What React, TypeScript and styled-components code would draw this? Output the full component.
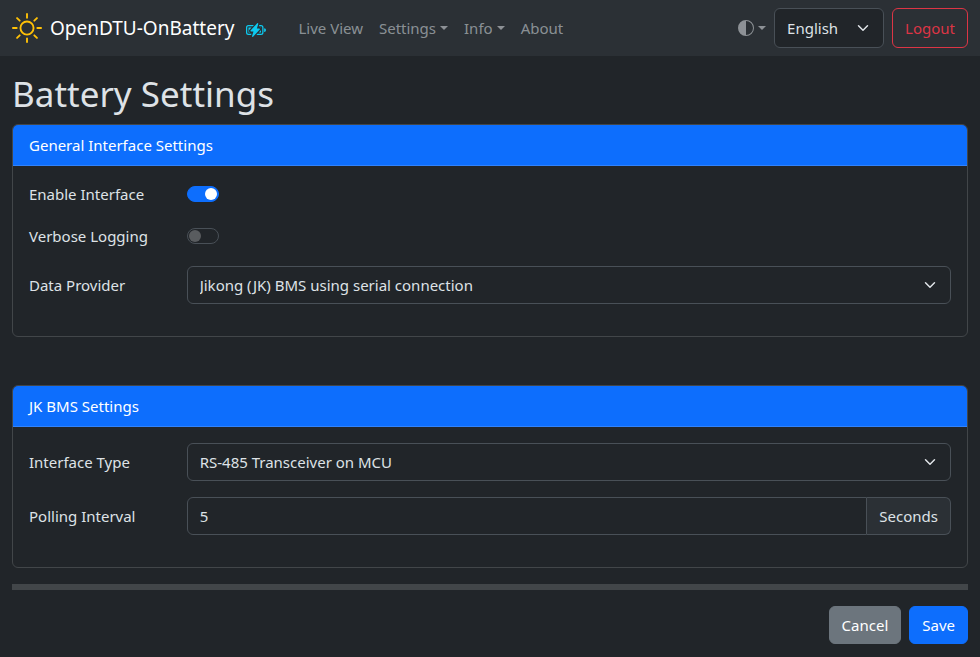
import React from "react";
import styled, { createGlobalStyle } from "styled-components";
import { BsBatteryCharging, BsCircleHalf, BsSun } from "react-icons/bs";

const chevron = `url("data:image/svg+xml,%3csvg xmlns='http://www.w3.org/2000/svg' viewBox='0 0 16 16'%3e%3cpath fill='none' stroke='%23dee2e6' stroke-linecap='round' stroke-linejoin='round' stroke-width='2' d='m2 5 6 6 6-6'/%3e%3c/svg%3e")`;

const GlobalStyle = createGlobalStyle`
  *, *::before, *::after { box-sizing: border-box; }
  body {
    margin: 0;
    background: #212529;
    color: #dee2e6;
    font: 400 15px/24px "Noto Sans", sans-serif;
  }
  button, input, select { font: inherit; }
`;

const Navbar = styled.nav`
  display: flex;
  align-items: center;
  padding: 8px 12px;
  background: #2b3035;
`;

const Brand = styled.a`
  display: flex;
  align-items: center;
  gap: 8px;
  margin-right: 24px;
  font-size: 19px;
  line-height: 40px;
  color: #fff;
  text-decoration: none;
  white-space: nowrap;
`;

const BrandBadge = styled(BsBatteryCharging)`
  margin-left: 12px;
  color: #0dcaf0;
  vertical-align: middle;
`;

const NavLinks = styled.div`
  display: flex;
  flex: 1;
`;

const NavLink = styled.a`
  display: flex;
  align-items: center;
  gap: 4px;
  padding: 8px;
  color: rgba(222, 226, 230, 0.55);
  text-decoration: none;
  white-space: nowrap;
`;

const NavActions = styled.div`
  display: flex;
  align-items: stretch;
  gap: 8px;
  min-height: 40px;
`;

const ThemeButton = styled.button`
  display: flex;
  align-items: center;
  gap: 4px;
  padding: 0;
  border: 0;
  background: none;
  color: rgba(222, 226, 230, 0.55);
`;

const Caret = styled.span`
  border-top: 4px solid;
  border-right: 4px solid transparent;
  border-left: 4px solid transparent;
`;

const Select = styled.select<{ $width?: string }>`
  appearance: none;
  width: ${(p) => p.$width ?? "100%"};
  min-height: 38px;
  padding: 6px 36px 6px 12px;
  border: 1px solid #495057;
  border-radius: 6px;
  background: #212529 ${chevron} no-repeat right 12px center / 16px 12px;
  color: #dee2e6;
`;

const Button = styled.button<{ $tone: "primary" | "secondary" | "danger" }>`
  padding: 6px 12px;
  border: 1px solid
    ${(p) => ({ primary: "#0d6efd", secondary: "#6c757d", danger: "#dc3545" })[p.$tone]};
  border-radius: 6px;
  background: ${(p) => ({ primary: "#0d6efd", secondary: "#6c757d", danger: "transparent" })[p.$tone]};
  color: ${(p) => (p.$tone === "danger" ? "#dc3545" : "#fff")};
`;

const Main = styled.main`
  padding: 16px 12px 12px;
`;

const Title = styled.h1`
  margin: 0 0 8px;
  font-size: 35px;
  font-weight: 400;
  line-height: 44px;
`;

const Card = styled.section`
  border: 1px solid #424649;
  border-radius: 6px;
  overflow: hidden;

  & + & {
    margin-top: 48px;
  }
`;

const CardHeader = styled.h2`
  margin: 0;
  padding: 8px 16px;
  border-bottom: 1px solid #3183fc;
  background: #0d6efd;
  color: #fff;
  font-size: 15px;
  font-weight: 400;
  line-height: 24px;
`;

const CardBody = styled.div`
  padding: 16px;
`;

const Row = styled.div`
  display: grid;
  grid-template-columns: 2fr 10fr;
  align-items: center;
  min-height: 26px;
  margin: 0 -12px 16px;

  & > * {
    min-width: 0;
    margin: 0 12px;
  }
`;

const SwitchRow = styled(Row)`
  align-items: start;
`;

const Control = styled.div`
  display: flex;
`;

const Switch = styled.input`
  appearance: none;
  display: flex;
  align-items: center;
  width: 32px;
  height: 16px;
  margin: 4px 0;
  padding: 1px;
  border: 1px solid #495057;
  border-radius: 8px;
  background: #212529;

  &::before {
    content: "";
    width: 12px;
    height: 12px;
    border-radius: 50%;
    background: #595c5f;
  }

  &:checked {
    justify-content: flex-end;
    border-color: #0d6efd;
    background: #0d6efd;
  }

  &:checked::before {
    background: #fff;
  }
`;

const TextInput = styled.input`
  flex: 1;
  min-width: 0;
  height: 38px;
  padding: 6px 12px;
  border: 1px solid #495057;
  border-radius: 6px 0 0 6px;
  background: #212529;
  color: #dee2e6;
`;

const Unit = styled.span`
  padding: 6px 12px;
  border: 1px solid #495057;
  border-left: 0;
  border-radius: 0 6px 6px 0;
  background: #2b3035;
`;

const Divider = styled.hr`
  height: 6px;
  margin: 16px 0;
  border: 0;
  background: #424649;
`;

const Actions = styled.div`
  display: flex;
  justify-content: flex-end;
  gap: 8px;
`;

export default function App() {
  return (
    <>
      <GlobalStyle />
      <Navbar>
        <Brand href="#">
          <BsSun size={30} color="#ffc107" />
          <span>
            OpenDTU-OnBattery
            <BrandBadge size={20} />
          </span>
        </Brand>
        <NavLinks>
          <NavLink href="#live">Live View</NavLink>
          <NavLink href="#settings">Settings<Caret /></NavLink>
          <NavLink href="#info">Info<Caret /></NavLink>
          <NavLink href="#about">About</NavLink>
        </NavLinks>
        <NavActions>
          <ThemeButton type="button" aria-label="Toggle theme">
            <BsCircleHalf size={16} />
            <Caret />
          </ThemeButton>
          <Select $width="110px" aria-label="Language" defaultValue="English">
            <option>English</option>
            <option>Deutsch</option>
            <option>Français</option>
          </Select>
          <Button type="button" $tone="danger">Logout</Button>
        </NavActions>
      </Navbar>
      <Main>
        <Title>Battery Settings</Title>
        <form onSubmit={(e) => e.preventDefault()}>
          <Card>
            <CardHeader>General Interface Settings</CardHeader>
            <CardBody>
              <SwitchRow>
                <label htmlFor="enable">Enable Interface</label>
                <Control><Switch id="enable" type="checkbox" role="switch" defaultChecked /></Control>
              </SwitchRow>
              <SwitchRow>
                <label htmlFor="verbose">Verbose Logging</label>
                <Control><Switch id="verbose" type="checkbox" role="switch" /></Control>
              </SwitchRow>
              <Row>
                <label htmlFor="provider">Data Provider</label>
                <Control>
                  <Select id="provider">
                    <option>Jikong (JK) BMS using serial connection</option>
                  </Select>
                </Control>
              </Row>
            </CardBody>
          </Card>
          <Card>
            <CardHeader>JK BMS Settings</CardHeader>
            <CardBody>
              <Row>
                <label htmlFor="interface">Interface Type</label>
                <Control>
                  <Select id="interface">
                    <option>RS-485 Transceiver on MCU</option>
                  </Select>
                </Control>
              </Row>
              <Row>
                <label htmlFor="interval">Polling Interval</label>
                <Control>
                  <TextInput id="interval" inputMode="numeric" defaultValue="5" />
                  <Unit>Seconds</Unit>
                </Control>
              </Row>
            </CardBody>
          </Card>
          <Divider />
          <Actions>
            <Button type="button" $tone="secondary">Cancel</Button>
            <Button type="submit" $tone="primary">Save</Button>
          </Actions>
        </form>
      </Main>
    </>
  );
}
